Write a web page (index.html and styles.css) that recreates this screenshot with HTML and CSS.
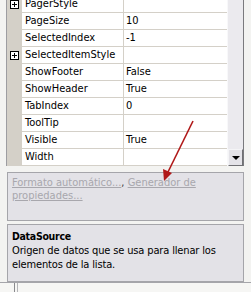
FILE: index.html
```html
<!DOCTYPE html>
<html>
<head>
<meta charset="utf-8">
<link rel="stylesheet" href="styles.css">
</head>
<body>
<div class="pane">
  <div class="grid">
    <div class="rows">
      <div class="list">
        <div class="row"><div class="g"><span class="plus"></span></div><div class="n">PagerStyle</div><div class="v"></div></div>
        <div class="row"><div class="g"></div><div class="n">PageSize</div><div class="v">10</div></div>
        <div class="row"><div class="g"></div><div class="n">SelectedIndex</div><div class="v">-1</div></div>
        <div class="row"><div class="g"><span class="plus"></span></div><div class="n">SelectedItemStyle</div><div class="v"></div></div>
        <div class="row"><div class="g"></div><div class="n">ShowFooter</div><div class="v">False</div></div>
        <div class="row"><div class="g"></div><div class="n">ShowHeader</div><div class="v">True</div></div>
        <div class="row"><div class="g"></div><div class="n">TabIndex</div><div class="v">0</div></div>
        <div class="row"><div class="g"></div><div class="n">ToolTip</div><div class="v"></div></div>
        <div class="row"><div class="g"></div><div class="n">Visible</div><div class="v">True</div></div>
        <div class="row"><div class="g"></div><div class="n">Width</div><div class="v"></div></div>
      </div>
    </div>
    <div class="sb">
      <div class="track"></div>
      <div class="btn"><span class="tri"></span></div>
    </div>
  </div>
  <div class="commands">
    <span class="link">Formato automático...</span>, <span class="link">Generador de propiedades...</span>
  </div>
  <div class="desc">
    <div class="title">DataSource</div>
    <div class="text">Origen de datos que se usa para llenar los elementos de la lista.</div>
  </div>
  <div class="tabs">
    <div class="tab first"></div>
    <div class="tab second"></div>
  </div>
  <svg class="arrow" width="251" height="292" viewBox="0 0 251 292">
    <line x1="193" y1="121" x2="168" y2="172" stroke="#b01818" stroke-width="1.6"/>
    <polygon points="164,181 163,169 172,173" fill="#b01818"/>
  </svg>
</div>
</body>
</html>
```
FILE: styles.css
```css
html, body {
  margin: 0;
  padding: 0;
}
body {
  width: 251px;
  height: 292px;
  overflow: hidden;
  background: #f3f3f1;
  font-family: "DejaVu Sans Condensed", "DejaVu Sans", sans-serif;
  font-stretch: condensed;
  font-size: 11px;
  color: #000;
}
.pane {
  position: relative;
  width: 251px;
  height: 292px;
}
.grid {
  display: flex;
  margin-left: 6px;
  width: 236px;
  height: 166px;
  border-left: 1px solid #9d9da1;
  border-right: 1px solid #7a7a7e;
  background: #fff;
}
.rows {
  flex: 1;
  overflow: hidden;
}
.list {
  margin-top: -4px;
}
.row {
  display: flex;
  height: 17px;
}
.g {
  width: 15px;
  background: #d4d0c8;
  display: flex;
  align-items: center;
  justify-content: center;
}
.plus {
  position: relative;
  width: 7px;
  height: 7px;
  border: 1px solid #000;
  background: #fff;
}
.plus::before, .plus::after {
  content: "";
  position: absolute;
  background: #000;
}
.plus::before { left: 1px; top: 3px; width: 5px; height: 1px; }
.plus::after { left: 3px; top: 1px; width: 1px; height: 5px; }
.n, .v {
  box-sizing: border-box;
  height: 17px;
  line-height: 16px;
  padding-left: 3px;
  border-bottom: 1px solid #d4d0c8;
  white-space: nowrap;
}
.n {
  width: 102px;
  border-right: 1px solid #d4d0c8;
}
.v {
  flex: 1;
  padding-left: 2px;
}
.sb {
  width: 16px;
  display: flex;
  flex-direction: column;
  background: #ebeaee;
  border-left: 1px solid #f8f8fa;
  box-sizing: border-box;
}
.track {
  flex: 1;
}
.btn {
  height: 17px;
  box-sizing: border-box;
  background: #e4e3e8;
  border-top: 1px solid #f4f4f6;
  border-left: 1px solid #f4f4f6;
  border-right: 1px solid #707074;
  border-bottom: 1px solid #707074;
  display: flex;
  align-items: center;
  justify-content: center;
}
.tri {
  width: 0;
  height: 0;
  border-left: 4px solid transparent;
  border-right: 4px solid transparent;
  border-top: 4px solid #000;
}
.commands {
  box-sizing: border-box;
  margin: 6px 0 0 7px;
  width: 237px;
  height: 49px;
  border: 1px solid #a5a5aa;
  background: #e3e2e7;
  padding: 3px 4px 0 4px;
  line-height: 13px;
  color: #404040;
}
.link {
  color: #a8a7ad;
  text-decoration: underline;
}
.desc {
  box-sizing: border-box;
  margin: 3px 0 0 7px;
  width: 237px;
  height: 58px;
  border: 1px solid #a5a5aa;
  background: #e3e2e7;
  padding: 4px 4px 0 4px;
}
.title {
  font-weight: bold;
  font-size: 10.5px;
  letter-spacing: -0.3px;
  line-height: 14px;
}
.text {
  line-height: 14px;
  margin-top: 1px;
  letter-spacing: -0.15px;
}
.tabs {
  display: flex;
  height: 10px;
  border-top: 1px solid #a5a5aa;
  background: #f6f6f4;
}
.tab.first {
  width: 14px;
  border-right: 1px solid #8a8a8e;
}
.tab.second {
  width: 2px;
  border-right: 1px solid #b5b5b8;
}
.arrow {
  position: absolute;
  left: 0;
  top: 0;
  pointer-events: none;
}
```
